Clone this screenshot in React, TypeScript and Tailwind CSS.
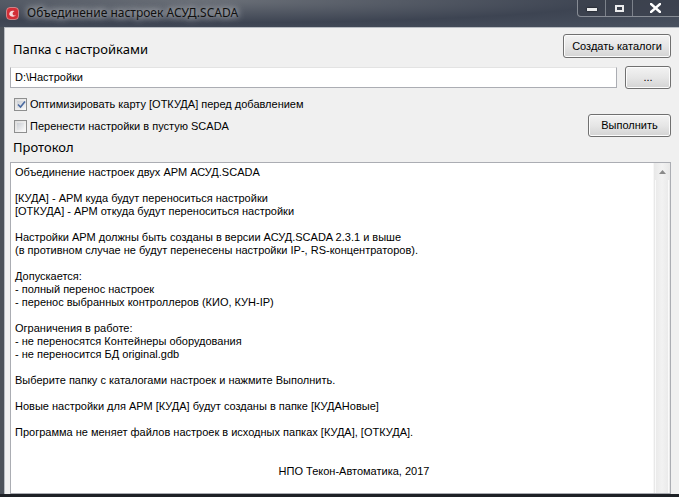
import React from "react";

const lines: string[] = [
  "Объединение настроек двух АРМ АСУД.SCADA",
  "",
  "[КУДА] - АРМ куда будут переноситься настройки",
  "[ОТКУДА] - АРМ откуда будут переноситься настройки",
  "",
  "Настройки АРМ должны быть созданы в версии АСУД.SCADA 2.3.1 и выше",
  "(в противном случае не будут перенесены настройки IP-, RS-концентраторов).",
  "",
  "Допускается:",
  "- полный перенос настроек",
  "- перенос выбранных контроллеров (КИО, КУН-IP)",
  "",
  "Ограничения в работе:",
  "- не переносятся Контейнеры оборудования",
  "- не переносится БД original.gdb",
  "",
  "Выберите папку с каталогами настроек и нажмите Выполнить.",
  "",
  "Новые настройки для АРМ [КУДА] будут созданы в папке [КУДАНовые]",
  "",
  "Программа не меняет файлов настроек в исходных папках [КУДА], [ОТКУДА].",
  "",
  "",
];

const WinButton = ({ label, className }: { label: string; className: string }) => (
  <button
    className={`h-[23px] rounded-[3px] border border-[#707070] bg-gradient-to-b from-[#f3f3f3] via-[#e6e6e6] to-[#d4d4d4] text-[11px] text-black shadow-[inset_0_0_0_1px_#fcfcfc] ${className}`}
  >
    {label}
  </button>
);

const CheckBox = ({ checked, label }: { checked: boolean; label: string }) => (
  <label className="flex items-center gap-[3px] h-[13px]">
    <span className="w-[13px] h-[13px] border border-[#8e8f8f] bg-gradient-to-br from-[#dcdcdc] to-[#fbfbfb] p-[2px] flex">
      <span className="flex-1 bg-gradient-to-br from-[#cbcfd5] to-[#f6f6f6] flex items-center justify-center">
        {checked && (
          <svg width="9" height="9" viewBox="0 0 9 9">
            <path d="M1 4.5 L3.5 7 L8 1.5" fill="none" stroke="#4a6aa0" strokeWidth="1.6" />
          </svg>
        )}
      </span>
    </span>
    <span className="text-[11px] text-black">{label}</span>
  </label>
);

export default function App() {
  return (
    <div
      className="w-[679px] h-[497px] overflow-hidden flex flex-col bg-gradient-to-r from-[#4c525a] via-[#3a4150] to-[#4e5664]"
      style={{ fontFamily: '"Liberation Sans", "DejaVu Sans", sans-serif' }}
    >
      {/* title bar */}
      <div className="h-[27px] flex items-start relative bg-[radial-gradient(ellipse_at_30%_0%,#6b7078_0%,#3d4452_60%,#4a5260_100%)]">
        <div className="flex items-center h-[26px] pl-[6px] gap-[8px]">
          <svg width="13" height="13" viewBox="0 0 13 13">
            <rect x="0.5" y="0.5" width="12" height="12" rx="3.5" fill="#d12e37" stroke="#f3b3b3" strokeWidth="0.6" />
            <path d="M3.2 7.5 C3 4.5 6 3 8.5 4.2 C7 4.8 6.2 6 6.8 7.4 C7.6 9 9.6 8.6 10 7.2 C10 9.8 5 11 3.2 7.5 Z" fill="#f7d9da" />
          </svg>
          <span
            className="text-[12px] text-[#101010] [text-shadow:0_0_6px_#ffffffcc,0_0_10px_#ffffff99]"
            style={{ fontFamily: '"Noto Sans", "Open Sans", sans-serif' }}
          >
            Объединение настроек АСУД.SCADA
          </span>
        </div>
        <div className="ml-auto flex h-[17px] border-l border-b border-[#a9adb4]/70 rounded-bl-[4px] overflow-hidden bg-[#3a404b]/60">
          <div className="w-[28px] flex items-end justify-center pb-[5px] border-r border-[#a9adb4]/60">
            <span className="w-[10px] h-[3px] bg-white/90 shadow-[0_0_2px_#000]" />
          </div>
          <div className="w-[27px] flex items-center justify-center border-r border-[#a9adb4]/60">
            <span className="w-[9px] h-[7px] border-2 border-white/90" />
          </div>
          <div className="w-[46px] flex items-center justify-center pr-[2px]">
            <svg width="11" height="10" viewBox="0 0 11 10">
              <path d="M1 1 L10 9 M10 1 L1 9" stroke="#ffffff" strokeWidth="2.4" strokeLinecap="square" />
            </svg>
          </div>
        </div>
      </div>

      {/* client */}
      <div className="flex-1 flex flex-col ml-[4px] bg-[#f0f0f0] border-t border-l border-[#b8bcc2] pl-[5px] pr-[8px] pt-[6px] min-h-0">
        <div className="flex items-end justify-between h-[24px]">
          <span className="text-[13px] text-black pl-[3px] -mb-[1px]" style={{ fontFamily: '"Noto Sans", sans-serif' }}>
            Папка с настройками
          </span>
          <WinButton label="Создать каталоги" className="w-[108px] h-[24px]" />
        </div>

        <div className="flex items-center mt-[8px] gap-[8px]">
          <div className="flex-1 h-[21px] border border-[#abadb3] border-t-[#e3e3e3] bg-white flex items-center pl-[4px] text-[11px] text-black">
            D:\Настройки
          </div>
          <WinButton label="..." className="w-[46px] h-[22px] text-[#555]" />
        </div>

        <div className="mt-[9px] pl-[4px]">
          <CheckBox checked label="Оптимизировать карту [ОТКУДА] перед добавлением" />
        </div>

        <div className="flex items-center justify-between mt-[3px]">
          <div className="pl-[4px] pt-[1px]">
            <CheckBox checked={false} label="Перенести настройки в пустую SCADA" />
          </div>
          <WinButton label="Выполнить" className="w-[83px]" />
        </div>

        <div className="h-[25px] flex items-center pb-[3px] pl-[3px] text-[13px] text-black" style={{ fontFamily: '"Noto Sans", sans-serif' }}>
          Протокол
        </div>

        <div className="flex-1 flex border border-[#abadb3] bg-white min-h-0 overflow-hidden">
          <div className="flex-1 pl-[4px] pt-[3px] text-[11px] leading-[13px] text-black">
            {lines.map((l, i) => (
              <div key={i} className="h-[13px] whitespace-pre">
                {l}
              </div>
            ))}
            <div className="h-[13px] text-center pl-[40px]">НПО Текон-Автоматика, 2017</div>
          </div>
          <div className="w-[17px] flex flex-col bg-gradient-to-r from-[#e8e8e8] via-[#f2f2f2] to-[#e8e8e8] border-l border-[#f7f7f7]">
            <div className="h-[17px] flex items-center justify-center">
              <svg width="7" height="4" viewBox="0 0 7 4">
                <path d="M0 4 L3.5 0 L7 4 Z" fill="#8a8a8a" />
              </svg>
            </div>
            <div className="flex-1 mx-[1px] border-x border-[#fafafa]" />
          </div>
        </div>
      </div>
      <div className="h-[3px] bg-[#1e2126]" />
    </div>
  );
}
